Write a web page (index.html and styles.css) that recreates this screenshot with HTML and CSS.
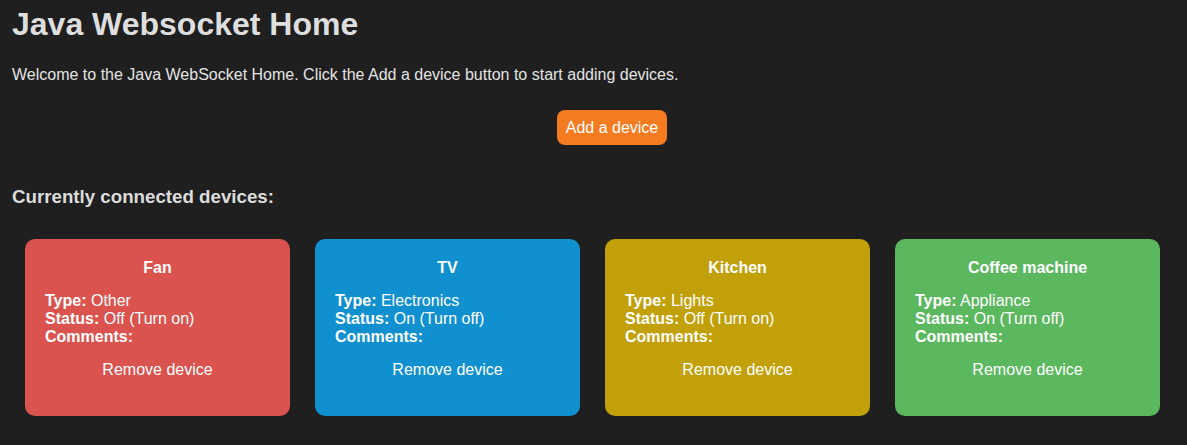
FILE: index.html
```html
<!DOCTYPE html>
<html>
<head>
<meta charset="utf-8">
<link rel="stylesheet" href="styles.css">
</head>
<body>
<div class="page">
  <h1 class="title">Java Websocket Home</h1>
  <p class="intro">Welcome to the Java WebSocket Home. Click the Add a device button to start adding devices.</p>
  <div class="add-row"><button class="add-btn">Add a device</button></div>
  <h2 class="section">Currently connected devices:</h2>
  <div class="devices">
    <div class="card red">
      <div class="name">Fan</div>
      <div class="info"><b>Type:</b> Other</div>
      <div class="info"><b>Status:</b> Off (Turn on)</div>
      <div class="info"><b>Comments:</b></div>
      <div class="remove">Remove device</div>
    </div>
    <div class="card blue">
      <div class="name">TV</div>
      <div class="info"><b>Type:</b> Electronics</div>
      <div class="info"><b>Status:</b> On (Turn off)</div>
      <div class="info"><b>Comments:</b></div>
      <div class="remove">Remove device</div>
    </div>
    <div class="card yellow">
      <div class="name">Kitchen</div>
      <div class="info"><b>Type:</b> Lights</div>
      <div class="info"><b>Status:</b> Off (Turn on)</div>
      <div class="info"><b>Comments:</b></div>
      <div class="remove">Remove device</div>
    </div>
    <div class="card green">
      <div class="name">Coffee machine</div>
      <div class="info"><b>Type:</b> Appliance</div>
      <div class="info"><b>Status:</b> On (Turn off)</div>
      <div class="info"><b>Comments:</b></div>
      <div class="remove">Remove device</div>
    </div>
  </div>
</div>
</body>
</html>
```
FILE: styles.css
```css
html, body {
  margin: 0;
  padding: 0;
  background: #1f1f1f;
}
body {
  font-family: "Liberation Sans", Arial, sans-serif;
  color: #e3e3e3;
}
.page {
  padding: 6px 12px 0 12px;
}
.title {
  margin: 0;
  font-size: 32px;
  font-weight: bold;
  line-height: 37px;
  color: #dedede;
}
.intro {
  margin: 23px 0 0 0;
  font-size: 16px;
  line-height: 18px;
  color: #e3e3e3;
}
.add-row {
  display: flex;
  justify-content: center;
  margin-top: 26px;
  padding-left: 37px;
}
.add-btn {
  font-family: "Liberation Sans", Arial, sans-serif;
  font-size: 16px;
  color: #fff;
  background: #f47b20;
  border: none;
  border-radius: 8px;
  height: 35px;
  padding: 0 9px;
}
.section {
  margin: 41px 0 0 0;
  font-size: 18.72px;
  line-height: 21px;
  font-weight: bold;
  color: #dcdcdc;
}
.devices {
  display: flex;
  gap: 25px;
  padding: 0 13px;
  margin-top: 32px;
}
.card {
  width: 265px;
  height: 177px;
  box-sizing: border-box;
  border-radius: 10px;
  padding: 20px 20px;
  color: #fff;
  font-size: 16px;
}
.red { background: #da534e; }
.blue { background: #1190d0; }
.yellow { background: #c1a00a; }
.green { background: #5cb85f; }
.name {
  text-align: center;
  font-weight: bold;
  line-height: 18px;
  margin-bottom: 15px;
}
.info {
  line-height: 18px;
}
.remove {
  text-align: center;
  line-height: 18px;
  margin-top: 15px;
}
```
